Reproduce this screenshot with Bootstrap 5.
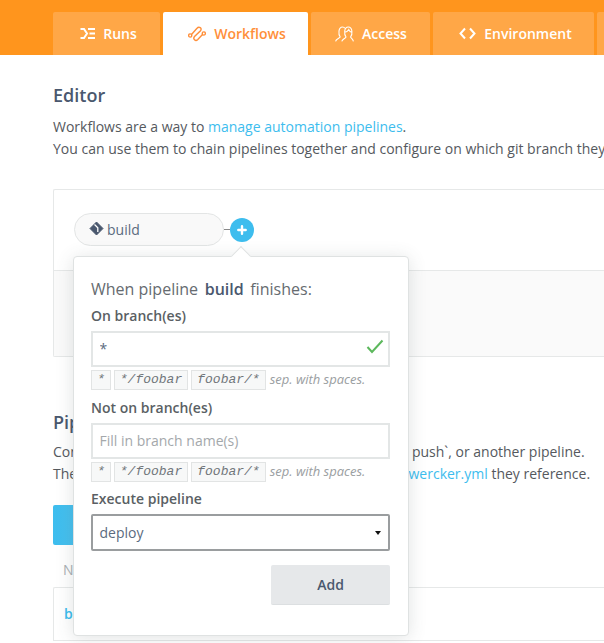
<!DOCTYPE html>
<html lang="en">
<head>
<meta charset="utf-8">
<title>Workflows</title>
<link rel="stylesheet" href="https://cdn.jsdelivr.net/npm/bootstrap@5.3.0/dist/css/bootstrap.min.css">
<style>
html,body{height:643px;overflow:hidden}
body{font-family:"Open Sans","Noto Sans",sans-serif;font-size:14px;color:#55595e;background:#fff;width:604px;position:relative}
.topbar{height:55px;background:#ff951d;padding:12px 0 0 53px;gap:3px;overflow:hidden}
.tabitem{height:43px;background:#ffa747;border-radius:2px 2px 0 0;color:#fff;font-weight:600;font-size:14px;gap:8px;flex:none}
.tabitem svg{flex:none}
.tab-runs{width:107px;padding-left:4px}
.tab-flow{width:145px;background:#fff;color:#ff8f3a;padding-left:3px}
.tab-access{width:119px;padding-left:1px}
.tab-env{width:161px;padding-left:4px}
.tab-rest{width:7px;border-radius:2px 0 0 0}
.pagebody{padding:0 0 0 53px}
.sect{font-size:18px;font-weight:600;color:#4a586e;line-height:24px;margin:28px 0 0}
.intro{font-size:14px;line-height:22px;margin:9px 0 0;white-space:nowrap}
.intro a,.pipe a{color:#3dbdee;text-decoration:none}
.editor{margin-top:29px;border:1px solid #e6e8e8;border-right:0;border-radius:2px 0 0 2px;height:168px}
.canvasarea{height:80px;padding:23px 0 0 20px}
.nodepill{width:150px;height:33px;border:1px solid #e3e5e5;border-radius:17px;background:#f9f9f9;padding-left:14px;gap:3px;color:#5b6b80;font-size:14px}
.nodepill svg{margin-bottom:3px}
.linker{width:6px;height:1px;background:#888}
.plusdot{width:24px;height:24px;border-radius:50%;background:#3dbdee}
.lowerband{height:86px;background:#fafafa;border-top:1px solid #e6e8e8}
.pipe{margin-top:53px;white-space:nowrap}
.pipe p{margin:0;line-height:22px;font-size:14px}
.pipehead{font-size:18px;font-weight:600;color:#4a586e;line-height:24px;margin:0 0 7px}
.bluebtn{width:120px;height:40px;margin-top:20px;background:linear-gradient(90deg,#3dbdee,#7fd3f4);border-radius:2px}
.namehead{color:#aab0b4;margin:15px 0 0 10px;line-height:20px}
.pipecard{margin-top:7px;height:54px;border:1px solid #e6e8e8;border-right:0;border-radius:2px 0 0 0;padding:15px 0 0 10px;color:#3dbdee;font-weight:600}
.pop{position:absolute;left:73px;top:256px;width:336px;height:380px;background:#fff;border:1px solid #dfe2e2;border-radius:4px;box-shadow:0 2px 18px rgba(70,80,80,.16);padding:12px 18px 0 17px}
.pop::before{content:"";position:absolute;left:160px;top:-8px;width:14px;height:14px;background:#fff;border-left:1px solid #dfe2e2;border-top:1px solid #dfe2e2;transform:rotate(45deg)}
.pophead{font-size:16px;line-height:40px;height:37px;color:#666b70;position:relative;white-space:nowrap}
.pophead b{color:#4a586e;font-weight:600;margin:0 2.500px}
.fieldlab{font-weight:600;color:#5a5f64;font-size:14px;line-height:19px;margin:0}
.fieldbox{height:36px;border:2px solid #e3e6e6;border-radius:0;font-size:14px;color:#5b6b80;padding:0 6.500px 1px;box-shadow:none}
.fieldbox::placeholder{color:#a4a8ab;opacity:1}
.fieldrow{position:relative;margin-top:6px}
.tickmark{position:absolute;right:6px;top:8px}
.hintline{gap:3px;margin-top:3px;height:20px;font-size:13px;font-style:italic;color:#9a9ea1;white-space:nowrap}
.hintcode{font-family:"Liberation Mono",monospace;font-size:13px;font-style:italic;background:#f7f8f8;border:1px solid #e2e4e4;color:#70757a;height:20px;line-height:18px;padding:0 5px}
.hinttext{margin-left:1px}
.gaplab{margin-top:8px}
.gaplab2{margin-top:7px}
.pickbox{height:37px;margin-top:6px;border:2px solid #9a9d9f;border-radius:2px;padding:0 6.500px 1px;color:#5b6b80;font-size:14px}
.caretmark{width:0;height:0;border-left:3.500px solid transparent;border-right:3.500px solid transparent;border-top:4px solid #111;margin:1px 1px 0 0}
.addbtn{width:119px;height:40px;background:#e6e8ea;border:0;border-bottom:1px solid #dcdfe1;border-radius:2px;color:#4a586e;font-weight:600;font-size:14px;margin:14px 0 0 auto;display:block}
</style>
</head>
<body>
<nav class="topbar d-flex align-items-start">
  <div class="tabitem tab-runs d-flex align-items-center justify-content-center">
    <svg width="15" height="11" viewBox="0 0 15 11" fill="none" stroke="#fff" stroke-width="2"><path d="M0.5 1H4L7 5.5L4 10H0.5M8 1H15M9.5 5.5H15M8 10H15"/></svg>Runs</div>
  <div class="tabitem tab-flow d-flex align-items-center justify-content-center">
    <svg width="18" height="16" viewBox="0 0 18 16" fill="none" stroke="#ff8f3a" stroke-width="1.400"><circle cx="2.200" cy="9.500" r="1.600"/><circle cx="15.800" cy="7.500" r="1.600"/><path d="M3.500 8.500L9 2.300C11-.2 14.500 2.200 12.500 4.700L6.500 10.500C4.500 13 7.500 15.800 9.800 13.500L14.500 8.500"/></svg>Workflows</div>
  <div class="tabitem tab-access d-flex align-items-center justify-content-center">
    <svg width="19" height="16" viewBox="0 0 19 16" fill="none" stroke="#fff" stroke-width="1.100"><path d="M0.600 15.400C1 12.800 4 12.600 5.200 11C3.200 8.500 3.200 1 7.500 1C8.700 1 9.500 1.500 10 2.300M6.800 15.400C7.200 13 10 12.800 11 11C9 8.500 8.800 1 13.300 1C17.800 1 17.600 8.500 15.600 11C16.600 12.800 18 13 18.400 15.400M9.800 6.300C11.500 6.300 13 5 13.800 3.600C14.300 5 15.300 6 16.700 6.300"/></svg>Access</div>
  <div class="tabitem tab-env d-flex align-items-center justify-content-center">
    <svg width="17" height="13" viewBox="0 0 17 13" fill="none" stroke="#fff" stroke-width="2"><path d="M6 1.500L1.500 6.500L6 11.500M11 1.500L15.500 6.500L11 11.500"/></svg>Environment</div>
  <div class="tabitem tab-rest"></div>
</nav>
<main class="pagebody">
  <h2 class="sect">Editor</h2>
  <p class="intro">Workflows are a way to <a href="#">manage automation pipelines</a>.<br>You can use them to chain pipelines together and configure on which git branch they</p>
  <section class="editor">
    <div class="canvasarea">
      <div class="d-flex align-items-center">
        <div class="nodepill d-flex align-items-center">
          <svg width="15" height="15" viewBox="0 0 15 15"><path fill="#4a586e" stroke="#4a586e" stroke-linejoin="round" d="M7.500 1L14 7.500L7.500 14L1 7.500Z"/><path stroke="#fff" fill="none" stroke-width="1.300" d="M5.500 3.500L8.800 6.800V11"/></svg>build</div>
        <div class="linker"></div>
        <div class="plusdot d-flex align-items-center justify-content-center"><svg width="10" height="10" viewBox="0 0 10 10" stroke="#fff" stroke-width="2.400" stroke-linecap="round"><path d="M5 1.300V8.700M1.300 5H8.700"/></svg></div>
      </div>
    </div>
    <div class="lowerband"></div>
  </section>
  <section class="pipe">
    <h2 class="pipehead">Pipelines</h2>
    <p>Configure when your pipelines run, for example, on git push`, or another pipeline.</p>
    <p>The pipeline names are read from every branch of the <a href="#">wercker.yml</a> they reference.</p>
    <div class="bluebtn"></div>
    <div class="namehead">Name</div>
    <div class="pipecard">build</div>
  </section>
</main>
<aside class="pop">
  <div class="pophead">When pipeline <b>build</b> finishes:</div>
  <label class="fieldlab d-block">On branch(es)</label>
  <div class="fieldrow">
    <input class="form-control fieldbox" value="*">
    <svg class="tickmark" width="18" height="15" viewBox="0 0 18 15" fill="none" stroke="#5cb85c" stroke-width="2"><path d="M1.500 8L6 13L16.500 1.500"/></svg>
  </div>
  <div class="hintline d-flex align-items-center"><span class="hintcode">*</span><span class="hintcode">*/foobar</span><span class="hintcode">foobar/*</span><span class="hinttext">sep. with spaces.</span></div>
  <label class="fieldlab gaplab d-block">Not on branch(es)</label>
  <div class="fieldrow"><input class="form-control fieldbox" placeholder="Fill in branch name(s)"></div>
  <div class="hintline d-flex align-items-center"><span class="hintcode">*</span><span class="hintcode">*/foobar</span><span class="hintcode">foobar/*</span><span class="hinttext">sep. with spaces.</span></div>
  <label class="fieldlab gaplab2 d-block">Execute pipeline</label>
  <div class="pickbox d-flex align-items-center justify-content-between">deploy<span class="caretmark"></span></div>
  <button class="btn addbtn" type="button">Add</button>
</aside>
</body>
</html>
